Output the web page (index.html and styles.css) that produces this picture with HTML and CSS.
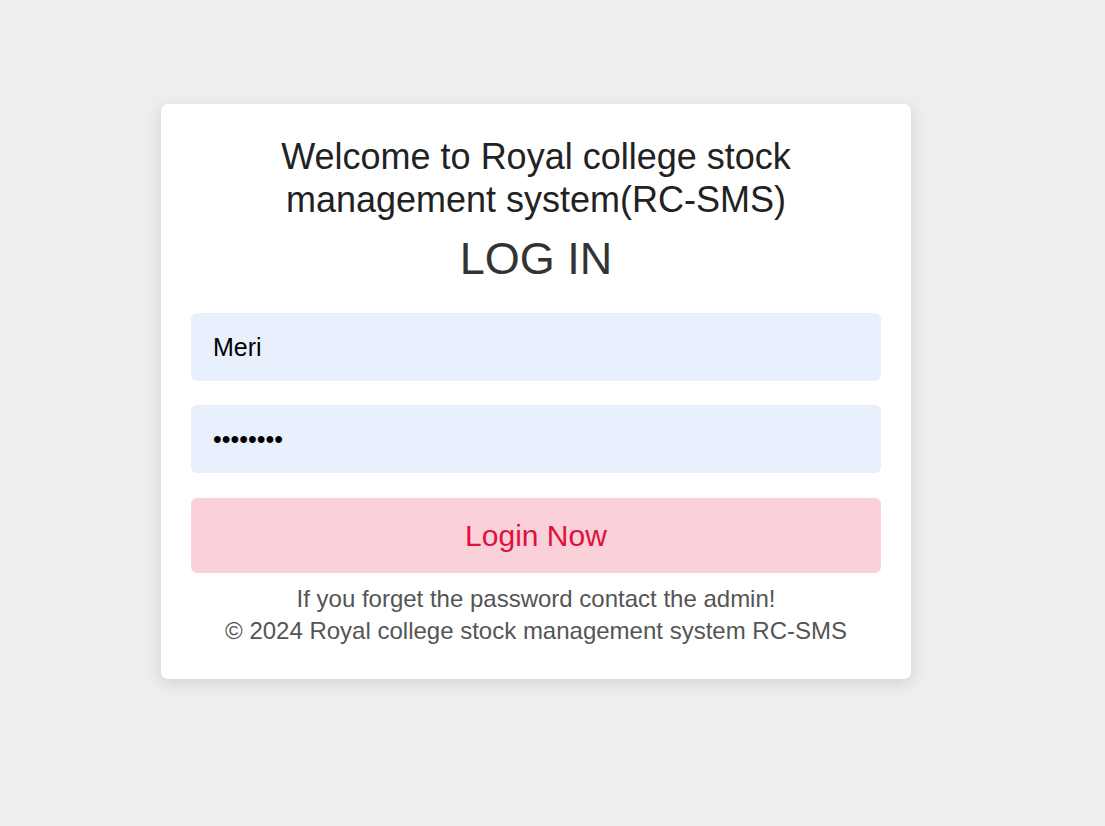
FILE: index.html
```html
<!DOCTYPE html>
<html lang="en">
<head>
<meta charset="utf-8">
<title>RC-SMS Login</title>
<link rel="stylesheet" href="styles.css">
</head>
<body>
<div class="page">
  <div class="card">
    <h2 class="welcome">Welcome to Royal college stock management system(RC-SMS)</h2>
    <h1 class="heading">LOG IN</h1>
    <form class="form">
      <input class="field" type="text" value="Meri">
      <input class="field" type="password" value="12345678">
      <button class="btn" type="button">Login Now</button>
    </form>
    <div class="footer">
      <p class="note">If you forget the password contact the admin!</p>
      <p class="note">© 2024 Royal college stock management system RC-SMS</p>
    </div>
  </div>
</div>
</body>
</html>
```

FILE: styles.css
```css
* { box-sizing: border-box; }
html, body { margin: 0; padding: 0; }
body {
  background: #eeeeee;
  font-family: "Liberation Sans", Arial, sans-serif;
  height: 826px;
}
.page {
  padding: 104px 0 0 161px;
}
.card {
  width: 750px;
  background: #ffffff;
  border-radius: 7px;
  box-shadow: 0 4px 16px rgba(0, 0, 0, 0.12);
  padding: 31px 30px 32px;
}
.welcome {
  margin: 0 auto;
  width: 560px;
  text-align: center;
  font-size: 36px;
  font-weight: normal;
  line-height: 43px;
  color: #222222;
}
.heading {
  margin: 10px 0 0;
  text-align: center;
  font-size: 45px;
  font-weight: normal;
  line-height: 56px;
  color: #333333;
}
.form {
  margin-top: 26px;
  display: flex;
  flex-direction: column;
  gap: 24px;
}
.field {
  display: block;
  width: 100%;
  height: 68px;
  border: none;
  border-radius: 6px;
  background: #e8f0fe;
  padding: 0 22px;
  font-family: "Liberation Sans", Arial, sans-serif;
  font-size: 25px;
  color: #000000;
  outline: none;
}
.btn {
  display: block;
  width: 100%;
  height: 75px;
  margin-top: 1px;
  border: none;
  border-radius: 6px;
  background: #fad0d9;
  color: #e0103f;
  font-family: "Liberation Sans", Arial, sans-serif;
  font-size: 30px;
  cursor: pointer;
}
.footer {
  margin-top: 10px;
  text-align: center;
}
.note {
  margin: 0;
  font-size: 24px;
  line-height: 32px;
  color: #555555;
}
```
